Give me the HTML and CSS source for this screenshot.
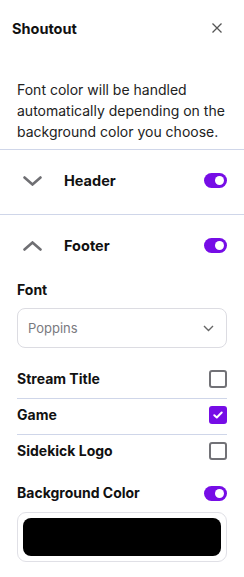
FILE: index.html
```html
<!DOCTYPE html>
<html lang="en">
<head>
    <meta charset="UTF-8">
    <meta name="viewport" content="width=device-width, initial-scale=1.0">
    <title>Shoutout</title>
    <link rel="stylesheet" href="styles.css">
</head>
<body>

    <div class="panel">
        <div class="panel-head">
            <h2>Shoutout</h2>
            <svg class="close" width="10" height="10" viewBox="0 0 10 10">
                <path d="M0.5 0.5L9.5 9.5M9.5 0.5L0.5 9.5" stroke="#555" stroke-width="1.3" fill="none"/>
            </svg>
        </div>

        <p class="intro">Font color will be handled automatically depending on the background color you choose.</p>

        <div class="section">
            <div class="section-head">
                <svg class="chevron" width="19" height="10" viewBox="0 0 19 10">
                    <path d="M1.5 1.5L9.5 8.5L17.5 1.5" stroke="#6f6f73" stroke-width="2.6" fill="none" stroke-linecap="round"/>
                </svg>
                <span class="section-title">Header</span>
                <span class="toggle on"></span>
            </div>
        </div>

        <div class="section">
            <div class="section-head">
                <svg class="chevron" width="19" height="10" viewBox="0 0 19 10">
                    <path d="M1.5 8.5L9.5 1.5L17.5 8.5" stroke="#6f6f73" stroke-width="2.6" fill="none" stroke-linecap="round"/>
                </svg>
                <span class="section-title">Footer</span>
                <span class="toggle on"></span>
            </div>

            <div class="section-body">
                <div class="label">Font</div>
                <div class="select">
                    <span>Poppins</span>
                    <svg width="11" height="7" viewBox="0 0 11 7">
                        <path d="M1 1L5.5 5.5L10 1" stroke="#666" stroke-width="1.4" fill="none"/>
                    </svg>
                </div>

                <div class="check-row">
                    <span class="label">Stream Title</span>
                    <span class="checkbox"></span>
                </div>
                <div class="check-row">
                    <span class="label">Game</span>
                    <span class="checkbox checked">
                        <svg width="10" height="8" viewBox="0 0 10 8">
                            <path d="M1.3 4.2L3.8 6.5L8.7 1.5" stroke="#fff" stroke-width="2" fill="none" stroke-linecap="round" stroke-linejoin="round"/>
                        </svg>
                    </span>
                </div>
                <div class="check-row last">
                    <span class="label">Sidekick Logo</span>
                    <span class="checkbox"></span>
                </div>

                <div class="color-head">
                    <span class="label">Background Color</span>
                    <span class="toggle on"></span>
                </div>
                <div class="color-box">
                    <div class="swatch"></div>
                </div>
            </div>
        </div>
    </div>

</body>
</html>
```

FILE: styles.css
```css
* {
    margin: 0;
    padding: 0;
    box-sizing: border-box;
}

body {
    background: #fff;
    font-family: Inter, "Liberation Sans", sans-serif;
    color: #1d1d1f;
}

.panel {
    width: 244px;
}

.panel-head {
    height: 56px;
    display: flex;
    align-items: center;
    justify-content: space-between;
    padding: 0 22px 0 12px;
}

.panel-head h2 {
    font-size: 14.5px;
    font-weight: 700;
    color: #111;
}

.intro {
    padding: 23px 17px 7px;
    font-size: 14px;
    line-height: 21px;
    color: #222;
    border-bottom: 1px solid #cfd6e9;
}

.section {
    border-bottom: 1px solid #cfd6e9;
}

.section-head {
    height: 64px;
    display: flex;
    align-items: center;
    padding: 0 17px 3px 23px;
}

.chevron {
    margin-right: 22px;
}

.section-title {
    flex: 1;
    font-size: 14.5px;
    font-weight: 700;
    color: #111;
}

.toggle {
    width: 23px;
    height: 15px;
    border-radius: 8px;
    background: #d0d0d6;
    display: flex;
    align-items: center;
    padding: 0 3px;
}

.toggle::after {
    content: "";
    width: 9px;
    height: 9px;
    border-radius: 50%;
    background: #fff;
}

.toggle.on {
    background: #760de6;
    justify-content: flex-end;
}

.section-body {
    padding: 1px 17px 15px;
}

.label {
    font-size: 14px;
    font-weight: 700;
    line-height: 20px;
    color: #111;
}

.select {
    margin-top: 8px;
    height: 40px;
    border: 1px solid #dcdce2;
    border-radius: 8px;
    display: flex;
    align-items: center;
    justify-content: space-between;
    padding: 0 12px 0 10px;
    margin-bottom: 15px;
}

.select span {
    font-size: 13px;
    color: #7a7a80;
}

.check-row {
    display: flex;
    align-items: center;
    justify-content: space-between;
    padding: 6px 0 9px;
    border-bottom: 1px solid #cfd6e9;
}

.check-row.last {
    border-bottom: none;
}

.checkbox {
    width: 18px;
    height: 18px;
    border: 2px solid #727277;
    border-radius: 3px;
    display: flex;
    align-items: center;
    justify-content: center;
}

.checkbox.checked {
    border: none;
    background: #760de6;
}

.color-head {
    margin-top: 13px;
    display: flex;
    align-items: center;
    justify-content: space-between;
}

.color-box {
    margin-top: 9px;
    border: 1px solid #e0e0e6;
    border-radius: 9px;
    padding: 5px;
}

.swatch {
    height: 38px;
    background: #000;
    border-radius: 8px;
}
```
